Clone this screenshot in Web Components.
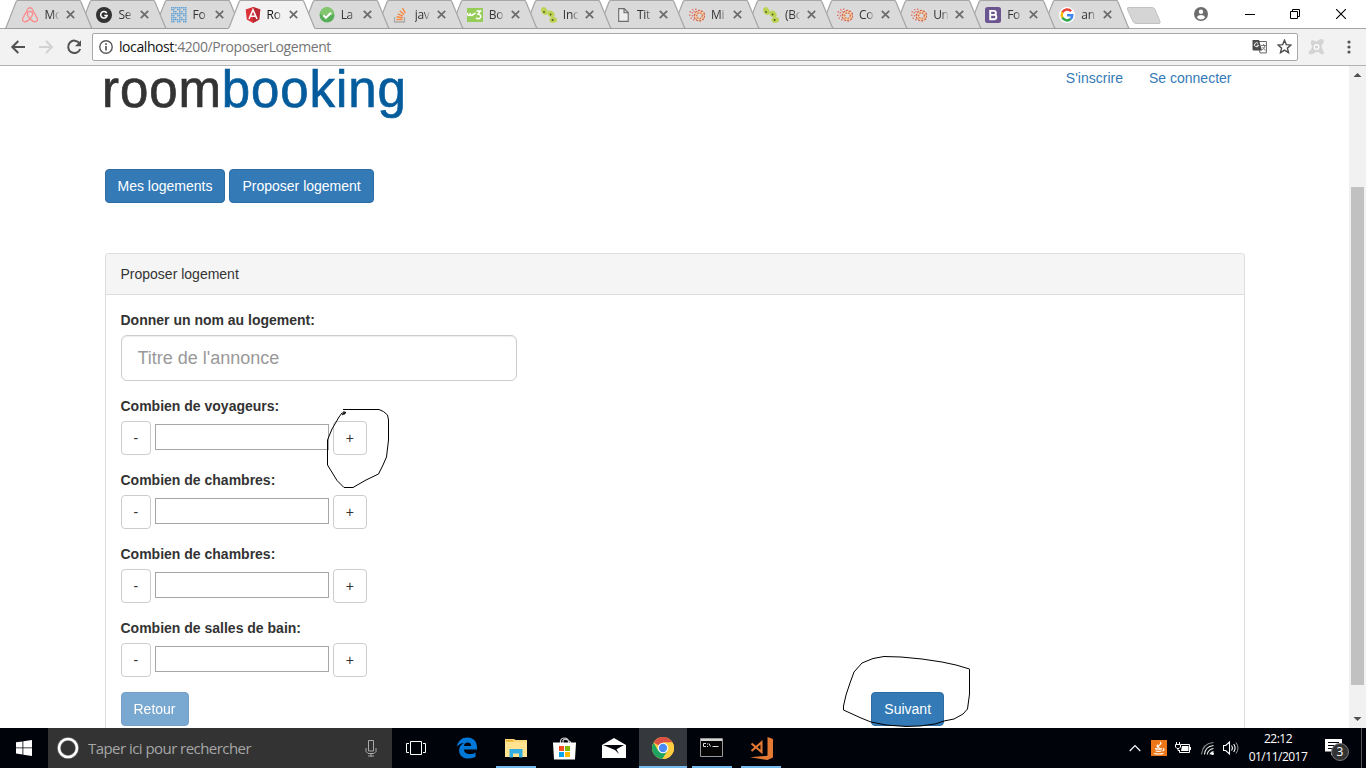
<!DOCTYPE html>
<html lang="fr">
<head>
<meta charset="utf-8">
<title>RoomBooking</title>
<style>
html,body{margin:0;height:100%;overflow:hidden;background:#fff}
body{font-family:"Liberation Sans",Arial,sans-serif;font-size:14px;line-height:20px;color:#333}
</style>
</head>
<body>
<app-desktop></app-desktop>
<script>
const define=(name,css,html)=>customElements.define(name,class extends HTMLElement{
  constructor(){
    super();
    const t=document.createElement('template');
    t.innerHTML='<style>*{box-sizing:border-box}'+css+'</style>'+(typeof html==='function'?html(this):html);
    this.attachShadow({mode:'open'}).append(t.content.cloneNode(true));
  }
});

/* Favicons, each on a 16x16 grid */
const cells=(()=>{let s='';for(let y=0;y<8;y++)for(let x=0;x<8;x++){if((x*3+y*5+x*y)%3!==1||x===0&&y%2)s+=`<path d="M${x*2} ${y*2}h1.6v1.6h-1.6z"/>`}return s})();
const ring=`<g fill="none"><circle cx="10.500" cy="8.700" r="3.900" stroke="#eab795" stroke-width="3.400"/><circle cx="10.500" cy="8.700" r="5.200" stroke="#cc5f5c" stroke-width="1.300" stroke-dasharray="1.800 1.400"/><circle cx="10.500" cy="8.700" r="2.800" stroke="#d4644f" stroke-width="1.200" stroke-dasharray="1.200 1.500"/><circle cx="10.500" cy="8.700" r="4" stroke="#fbe0a0" stroke-width="1.200" stroke-dasharray="1.300 2.200"/></g><g fill="#e07c72"><path d="M.5 4H2v1.500H.5zM3 2h1.500v1.500H3zM6 1.500h1.500V3H6zM2.500 5H4v1.500H2.500zM0 7.500h1.500V9H0zM2.800 8h1.500v1.500H2.800zM1.500 10.500H3V12H1.500zM4.500 4h1.300v1.300H4.500zM4 12h1.500v1.500H4z"/></g>`;
const seeds=`<g fill="#bdd353"><ellipse cx="3.4" cy="4" rx="3" ry="4" transform="rotate(-25 3.4 4)"/><ellipse cx="10" cy="7" rx="3.9" ry="2.900" transform="rotate(35 10 7)"/><ellipse cx="12.2" cy="13" rx="3.9" ry="2.900" transform="rotate(-8 12.2 13)"/></g><g fill="#4c5b2b"><circle cx="3" cy="5" r=".9"/><circle cx="9.6" cy="7.5" r=".9"/><circle cx="11.6" cy="13" r="1"/></g>`;
const fav={
 airbnb:`<path d="M8 11.7C6 9.500 5.300 8.200 5.300 7a2.700 2.700 0 0 1 5.400 0c0 1.200-.7 2.500-2.700 4.700-2 2.300-3.900 3.400-5.600 3.100C.8 14.500.1 12.900.8 11.300L5.800 2C6.700.3 9.300.3 10.200 2l5 9.300c.7 1.600 0 3.200-1.600 3.500-1.700.3-3.600-.8-5.600-3.100z" fill="none" stroke="#fb8a8d" stroke-width="1.300"/>`,
 g:`<circle cx="8" cy="8" r="8" fill="#333"/><path d="M10.800 6.100A3.300 3.300 0 1 0 11.200 8.400H8.300" fill="none" stroke="#fff" stroke-width="1.500"/>`,
 grid:`<g fill="#6ba5d6">${cells}</g>`,
 angular:`<path d="M8 0l7.300 2.600-1.100 9.800L8 16l-6.200-3.600L.7 2.600z" fill="#dd3138"/><path d="M8 0l7.300 2.600-1.100 9.800L8 16z" fill="#b92a34"/><path d="M4 12L8 2.700l4 9.300M5.700 9.200h4.600" fill="none" stroke="#fff" stroke-width="1.600"/>`,
 check:`<circle cx="8" cy="8" r="7.500" fill="#58af59"/><path d="M1 7a7 7 0 0 1 14 0c-3 2-10 2-14 0z" fill="#82c66f"/><path d="M4.300 8.300l2.600 2.500L12 5.700" fill="none" stroke="#fff" stroke-width="2.200"/>`,
 stack:`<path d="M1.500 10v5h10v-5" fill="none" stroke="#aaa" stroke-width="1.300"/><path d="M3.500 12.500h6M3.600 9.800l6 .9M4.700 6.800l5.500 2.300M6.700 3.800l4.300 3.800M9.500 1.200l2.800 4.900" stroke="#f58b48" stroke-width="1.400"/>`,
 w3:`<path d="M0 1h16v14H0z" fill="#96cd59"/><path d="M.5 6v1.500q1.300 2 2.700 0V6v1.500q1.400 2 2.800 0L8.500 6M9.500 4h4L11 7.200q3 .2 2.700 2.800-1.300 2.800-4.700 1" fill="none" stroke="#fff" stroke-width="1.500"/>`,
 seeds, ring,
 file:`<path d="M3.700 1.600h5.500l4 4v8.800H3.700zM9 1.600v4.200h4.200" fill="#eee" stroke="#6b6b6b" stroke-width="1.100"/>`,
 boot:`<rect width="16" height="16" rx="2.500" fill="#6b5591"/><path d="M5.200 3.900h3.700a2 2 0 0 1 0 4H5.200zm0 4h4a2.150 2.150 0 0 1 0 4.300h-4z" fill="none" stroke="#fff" stroke-width="1.900"/>`,
 google:`<circle cx="8" cy="8" r="8" fill="#fff"/><g fill="none" stroke-width="2.500"><path d="M12.100 4.200A5.300 5.300 0 0 0 3.400 5.400" stroke="#ea4335"/><path d="M3.400 5.400a5.300 5.300 0 0 0 0 5.200" stroke="#fbbc05"/><path d="M3.400 10.600A5.300 5.300 0 0 0 11.600 12" stroke="#34a853"/><path d="M11.600 12A5.300 5.300 0 0 0 13.300 8.200H8" stroke="#4285f4"/></g>`
};

define('browser-tab',`
:host{display:block;position:relative;flex:none;width:74.070px;height:29px;z-index:var(--z)}
.shape{position:absolute;left:-1px;top:0;display:block}
.row{position:relative;display:flex;align-items:center;height:29px;padding-left:16px}
.row svg{flex:none}
.t{width:15px;margin-left:6px;overflow:hidden;white-space:nowrap;font:12px/20px "Open Sans","Noto Sans",sans-serif;letter-spacing:-.3px;color:#333;-webkit-mask:linear-gradient(90deg,#000 55%,#0002);mask:linear-gradient(90deg,#000 55%,#0002)}
:host([active]) .t{color:#111}
.x{margin-left:7px}`,
el=>{const a=el.hasAttribute('active');return `<svg class="shape" width="90" height="29" viewBox="0 0 90 29"><path d="M0 28.500C1 28 1 27.500 1.500 26.500L11 2Q11.700.5 13 .5H74Q75.500.5 76 2L86 26.500Q86.500 28 87.500 28.500${a?'V29H0':''}z" fill="${a?'#f2f2f2':'#dadada'}"/><path d="M0 28.500C1 28 1 27.500 1.500 26.500L11 2Q11.700.5 13 .5H74Q75.500.5 76 2L86 26.500Q86.500 28 87.500 28.500" fill="none" stroke="#a6a6a6" stroke-width="1.200"/>${a?'':'<path d="M0 28.500H88" stroke="#9d9d9d"/>'}</svg>
<div class="row"><svg width="16" height="16" viewBox="0 0 16 16">${fav[el.getAttribute('icon')]}</svg><span class="t"><slot></slot></span><svg class="x" width="9" height="9" viewBox="0 0 9 9"><path d="M.8.8l7.400 7.400M8.200.8L.8 8.200" stroke="#6b6b6b" stroke-width="1.700"/></svg></div>`});

const tabs=[['airbnb','Mo'],['g','Se'],['grid','Fo'],['angular','Ro'],['check','La'],['stack','jav'],['w3','Bo'],['seeds','Inc'],['file','Tit'],['ring','Mi'],['seeds','(Bo'],['ring','Co'],['ring','Un'],['boot','Fo'],['google','an']];
define('tab-strip',`
:host{display:flex;position:relative;height:29px;padding-left:6.400px;background:linear-gradient(#fff 28px,#a6a6a6 28px)}
.new{flex:none;margin:6px 0 0 9px}
.win{display:flex;align-items:center;margin-left:auto;height:27px;padding-right:20px}
.win svg{display:block}`,
tabs.map((t,i)=>`<browser-tab icon="${t[0]}" ${i===3?'active':''} style="--z:${i===3?30:20-i}">${t[1]}</browser-tab>`).join('')+
`<svg class="new" width="36" height="19" viewBox="0 0 36 19"><path d="M2 1.500h24q2 0 3 2l5 12q.5 2-1 2H10q-2 0-3-2L1.500 3.500Q1 1.500 2 1.500z" fill="#d5d5d5" stroke="#c2c2c2"/></svg>
<div class="win"><svg width="14" height="14" viewBox="0 0 14 14" style="margin-right:37px"><circle cx="7" cy="7" r="7" fill="#6c6c6c"/><circle cx="7" cy="4.700" r="2.200" fill="#fff"/><path d="M2.800 10.200Q4 8 7 8t4.200 2.200Q9.500 12.400 7 12.400T2.800 10.200z" fill="#fff"/></svg>
<svg width="10" height="10" viewBox="0 0 10 10" style="margin-right:35px"><path d="M0 5.500h10" stroke="#000"/></svg>
<svg width="10" height="10" viewBox="0 0 10 10" style="margin-right:36px"><path d="M.5 2.500h7v7h-7zM2.500 2V.5h7v7H8" fill="none" stroke="#000"/></svg>
<svg width="10" height="10" viewBox="0 0 10 10"><path d="M0 0l10 10M10 0L0 10" stroke="#000" stroke-width="1.100"/></svg></div>`);

define('address-bar',`
:host{display:flex;align-items:center;height:37px;padding:0 13px 1px 10px;background:#f2f2f2;border-bottom:1px solid #b4b3b4}
svg{display:block;flex:none}
.box{flex:none;display:flex;align-items:center;width:1206px;height:28px;margin-left:10px;padding:0 5px 0 6px;background:#fff;border:1px solid #a9a8a9;border-radius:2px}
.url{margin-left:6px;font:14px/20px "Open Sans","Noto Sans",sans-serif;letter-spacing:-.42px;color:#757575;white-space:nowrap}
b{font-weight:400;color:#111}
.end{display:flex;align-items:center;margin-left:auto}`,
`<svg width="72" height="18" viewBox="0 0 72 18"><path d="M15 9H2.500M8.300 3L2.300 9l6 6" fill="none" stroke="#525252" stroke-width="2"/><path d="M29 9h13M36 3l6 6-6 6" fill="none" stroke="#d2d2d2" stroke-width="2"/><path d="M69.500 5.300A6.200 6.200 0 1 0 70.200 11" fill="none" stroke="#525252" stroke-width="2"/><path d="M71 2.200v6h-6z" fill="#525252"/></svg>
<div class="box"><svg width="14" height="14" viewBox="0 0 14 14"><circle cx="7" cy="7" r="6.200" fill="none" stroke="#585858" stroke-width="1.400"/><path d="M7 6v4.500M7 3.300v1.700" stroke="#585858" stroke-width="1.700"/></svg>
<span class="url"><b>localhost</b>:4200/ProposerLogement</span>
<div class="end"><svg width="15" height="15" viewBox="0 0 15 15"><path d="M6 2.500h8.400v11.400H8z" fill="#fff" stroke="#666"/><path d="M1 1h6l3 10.500H1.500Q.5 11.500.5 10.500V1.500z" fill="#4c4c4c"/><path d="M6.200 4.600a2 2 0 1 0 .3 1.700H4.800" fill="none" stroke="#fff"/><path d="M9 6.500h5M11.600 5v1.500M13 6.500q-.5 3-3 4.500M10.500 8l3 3.500" fill="none" stroke="#777"/></svg>
<svg style="margin-left:10px" width="15" height="15" viewBox="0 0 15 15"><path d="M7.500 1.200l1.800 4.400 4.700.4-3.600 3.100 1.100 4.600-4-2.500-4 2.500 1.100-4.600L1 6l4.700-.4z" fill="none" stroke="#4e4e4e" stroke-width="1.400"/></svg></div></div>
<svg style="margin-left:10px" width="16" height="16" viewBox="0 0 16 16"><path d="M3 2q2-1.500 4 .5 2.500 0 4.500-2Q15-1 16 2q0 2-2.500 4.500Q14 10 16 14q-.500 2-3 1-2-2.500-5-2Q3 17 .7 14.500q-1-1.500 2.300-4Q5 8 3 5z" fill="#d4d4d4"/><circle cx="8.500" cy="8" r="2.300" fill="#d4d4d4" stroke="#fff" stroke-width="1.300"/></svg>
<svg style="margin-left:auto;margin-right:2.500px" width="4" height="14" viewBox="0 0 4 14"><g fill="#555"><circle cx="2" cy="2" r="1.600"/><circle cx="2" cy="7" r="1.600"/><circle cx="2" cy="12" r="1.600"/></g></svg>`);

define('rb-button',`
:host{display:block;flex:none;height:34px;padding:6px 12px;border:1px solid #2e6da4;border-radius:4px;background:#337ab7;color:#fff;white-space:nowrap;box-sizing:border-box}
:host([plain]){background:#fff;border-color:#ccc;color:#333}
:host([disabled]){opacity:.65}`,`<slot></slot>`);

define('number-stepper',`
:host{display:block;margin-bottom:15px}
label{display:block;font-weight:700;margin-bottom:5px}
.r{display:flex;align-items:flex-start}
input{width:174px;height:26px;margin:3px 4px 0 3.500px;padding:1px;border:1px solid #a6a6a6;border-radius:0;background:#fff;outline:0}`,
`<label><slot></slot></label><div class="r"><rb-button plain>-</rb-button><input type="text"><rb-button plain>+</rb-button></div>`);

define('rb-panel',`
:host{display:block;border:1px solid #ddd;border-bottom:0;border-radius:4px 4px 0 0;height:475px}
header{height:41px;padding:10px 15px;background:#f5f5f5;border-bottom:1px solid #ddd;border-radius:3px 3px 0 0}
.body{padding:15px 15px 0}`,`<header><slot name="title"></slot></header><div class="body"><slot></slot></div>`);

define('listing-form',`
:host{display:block}
label{display:block;font-weight:700;margin-bottom:5px}
.title{display:block;width:396px;height:46px;padding:10px 16px;margin-bottom:15px;border:1px solid #ccc;border-radius:6px;font:18px/24px "Liberation Sans",Arial,sans-serif;box-shadow:inset 0 1px 1px rgba(0,0,0,.075)}
.title::placeholder{color:#999;opacity:1}
.act{display:flex}.act rb-button+rb-button{margin-left:682.800px}`,
`<rb-panel><span slot="title">Proposer logement</span>
<label>Donner un nom au logement:</label><input class="title" placeholder="Titre de l'annonce">
<number-stepper>Combien de voyageurs:</number-stepper><number-stepper>Combien de chambres:</number-stepper><number-stepper>Combien de chambres:</number-stepper><number-stepper>Combien de salles de bain:</number-stepper>
<div class="act"><rb-button disabled>Retour</rb-button><rb-button>Suivant</rb-button></div></rb-panel>`);

define('site-page',`
:host{display:flex;height:662px}
main{flex:1;padding:0 104.500px;min-width:0}
.head{display:flex;justify-content:space-between;height:103px}
.logo{position:relative;font-size:51px;line-height:60px;margin:-6px 0 0 -2.500px;color:#333;height:60px;letter-spacing:.9px;-webkit-text-stroke:.7px currentColor}
.logo b{font-weight:400;color:#055c9d}
nav{display:flex;gap:26px;padding:2px 13px 0 0;color:#337ab7}
.btns{display:flex;gap:4px;margin-bottom:50px}
.sb{width:17px;flex:none;background:#f1f1f1;display:flex;flex-direction:column;align-items:center}
.thumb{width:13px;height:498px;margin-top:104px;background:#c1c1c1}
.sb svg{display:block;flex:none}`,
`<main><div class="head"><div class="logo">room<b>booking</b></div><nav><span>S'inscrire</span><span>Se connecter</span></nav></div>
<div class="btns"><rb-button>Mes logements</rb-button><rb-button>Proposer logement</rb-button></div><listing-form></listing-form></main>
<div class="sb"><svg width="17" height="17" viewBox="0 0 17 17"><path d="M4.500 11L8.500 7l4 4z" fill="#505050"/></svg><div class="thumb"></div><svg style="margin-top:26px" width="17" height="17" viewBox="0 0 17 17"><path d="M4.500 6l4 4 4-4z" fill="#505050"/></svg></div>`);

define('pen-marks',`:host{position:absolute;left:0;top:0;width:1366px;height:728px;pointer-events:none;z-index:40}svg{display:block}`,
`<svg width="1366" height="728" viewBox="0 0 1366 728" fill="none" stroke="#000" stroke-width="1"><path d="M343 409.500H379Q384 411 387.500 415L388.500 420V440L386.500 457 383 465 378.500 474 366 480 353 487.500H344L337 480.500 327.500 465V440L332 429 339 417 342 413 346 413M344 411v4M342 415l4-3"/><path d="M969.500 669V694L967.500 709 963 714 954 719 944 721 935 724 920 726 906 726.500 886 725 871 722 861 718 843.500 710V706L846 695 850 683 854 672 862 663 873 658.500 884 656.500 901 657 922 659 942 662 956 665 969.500 669"/></svg>`);

define('task-button',`
:host{display:flex;position:relative;flex:none;width:49px;height:40px;align-items:center;justify-content:center}
:host([current]){background:#35383c;width:48px}
i{position:absolute;bottom:0;left:5px;right:4px;height:2px;background:#76b9ed;display:none}
:host([open]) i{display:block}:host([current]) i{left:0;right:0}`,`<slot></slot><i></i>`);

define('task-bar',`
:host{display:flex;height:40px;background:#01030a;font-family:"Open Sans","Noto Sans",sans-serif;color:#fff}
svg{display:block;flex:none}
.start{width:48px;display:flex;align-items:center;justify-content:center}
.search{width:344px;background:#333;display:flex;align-items:center;padding:0 15px 0 9px;color:#a6a6a6;font-size:15px}
.search span{margin-left:9px;letter-spacing:-.55px;white-space:nowrap}
.search .mic{margin-left:auto}
.tray{display:flex;align-items:center;margin-left:auto}
.clock{width:60px;text-align:center;font-size:12px;line-height:18px;letter-spacing:-.5px;white-space:nowrap}
.note{position:relative;width:34px;height:28px;margin-left:16px}
.note em{position:absolute;left:7px;top:9px;width:18px;height:18px;border-radius:50%;background:#333;border:1px solid #777;font:12px/16px "Open Sans",sans-serif;text-align:center}
.edge{width:1px;height:40px;background:#555;margin-right:4px}`,
`<div class="start"><svg width="16" height="16" viewBox="0 0 16 16" fill="#fff"><path d="M0 2.300L6.500 1.400V7.500H0zM7.300 1.300L16 0v7.500H7.300zM0 8.300h6.500v6.200L0 13.600zM7.300 8.300H16V16l-8.700-1.300z"/></svg></div>
<div class="search"><svg width="22" height="22" viewBox="0 0 22 22"><circle cx="11" cy="11" r="9" fill="none" stroke="#777" stroke-width="3.600"/><circle cx="11" cy="11" r="9" fill="none" stroke="#fff" stroke-width="2.500"/></svg><span>Taper ici pour rechercher</span><svg class="mic" width="12" height="17" viewBox="0 0 12 17"><path d="M3.500.5h5v10.500h-5zM1 8v3.500L3 13.500H9l2-2V8M6 13.500v3M3 16h6" fill="none" stroke="#aaa"/></svg></div>
<task-button style="width:48px"><svg width="20" height="16" viewBox="0 0 20 16"><path d="M4.500 1.500h11v13h-11zM3 3.500H.5v9H3M17 3.500h2.500v9H17" fill="none" stroke="#fff"/></svg></task-button>
<task-button style="width:51px"><svg style="margin-left:3px" width="20" height="22" viewBox="0 0 21 22"><path d="M0 9.500C1 3.500 5 0 11 0c6.500 0 10 4.500 10 10v2.500H7.200c.3 3.500 3.300 4.800 6.300 4.800 2.300 0 4.300-.7 6-1.700v4.600C17.500 21.300 15 22 12 22 6 22 2.200 18.500 2.200 13.500c0-3.500 2-6.300 5-7.700C4.500 6 2 7.400 0 9.500zM7.300 9h7.600c0-2.300-1.200-3.900-3.600-3.900S7.500 6.700 7.300 9z" fill="#0078d7"/></svg></task-button>
<task-button open><svg width="22" height="19" viewBox="0 0 22 19"><path d="M0 0h9l1.500 1H22v17H0z" fill="#f9d878"/><path d="M1 1h7l1 1.500H1z" fill="#e7ad2c"/><path d="M0 3h22v15H0z" fill="#ffe391"/><path d="M4.500 10h13v8.500h-3.500V14.500H8v4H4.500z" fill="#32ade2"/></svg></task-button>
<task-button><svg width="23" height="23" viewBox="0 0 23 23"><path d="M7.500 7V4Q8 1 11.500 1t4 3v3M10 6V3.500Q11 2 13 2.500T17.500 5v2" fill="none" stroke="#ccc" stroke-width="1.200"/><path d="M0 5.500h23L22 22.500H1z" fill="#fff"/><path d="M6 9h5v5H6z" fill="#f25022"/><path d="M12 9h5v5h-5z" fill="#7fba00"/><path d="M6 15h5v5H6z" fill="#00a4ef"/><path d="M12 15h5v5h-5z" fill="#ffb900"/></svg></task-button>
<task-button style="width:50px"><svg width="24" height="20" viewBox="0 0 24 20"><path d="M0 7L12 0l12 7v13H0z" fill="#fff"/><path d="M1 7h21l-7.500 4.300L17 16 13 12z" fill="#01030a"/></svg></task-button>
<task-button current open><svg width="22" height="22" viewBox="0 0 22 22"><circle cx="11" cy="11" r="11" fill="#ffcd40"/><path d="M11 11L1.500 5.500A11 11 0 0 1 20.500 5.500H11z" fill="#dd5144"/><path d="M1.500 5.500A11 11 0 0 0 10.500 22l5.200-8.700L11 11 6.200 13.700z" fill="#1da462"/><path d="M11 5.500h9.500a11 11 0 0 1-10 16.500l5.300-8.300z" fill="#ffcd40"/><circle cx="11" cy="11" r="5.300" fill="#fff"/><circle cx="11" cy="11" r="4.200" fill="#4c8bf5"/></svg></task-button>
<task-button open><svg width="23" height="20" viewBox="0 0 23 20"><path d="M.5.5h22v18H.5z" fill="#050505" stroke="#999"/><path d="M1 1h21v2H1z" fill="#d5d5d5"/><path d="M6 5.500H3.500v3H6M7.500 5.500v1M7.500 8v1M9 5.500l1.500 3M12.500 8.500h6" fill="none" stroke="#ddd"/></svg></task-button>
<task-button open><svg width="24" height="23" viewBox="0 0 24 23" fill="#e37933"><path d="M18.500 0L24 2v18.500L18.500 23 1 20.300l17.500-1.500z"/><path d="M2.500 6.500L12.500 15V5.200L2.500 14" fill="none" stroke="#e37933" stroke-width="2.100"/></svg></task-button>
<div class="tray"><svg width="12" height="8" viewBox="0 0 12 8"><path d="M.7 7L6 1.700 11.300 7" fill="none" stroke="#fff" stroke-width="1.200"/></svg>
<svg style="margin-left:10px" width="16" height="16" viewBox="0 0 16 16"><path d="M0 0h16v16H0z" fill="#ed7718"/><path d="M9 2Q11 3.500 8.500 5T8.500 8M6.500 4.500q-1 1.500.5 3M4 8.700q3.500 1 7 0M4.500 11q3 .8 6 0M3 13.500q5 1 9.500 0M12 8.500q2.200.8-.5 2.500" fill="none" stroke="#fff" stroke-width="1.200"/></svg>
<svg style="margin-left:8px" width="16" height="12" viewBox="0 0 16 12"><path d="M6 2.500h8.500v8H4.500V8M15.500 5v3M1.500 0v2M4.500 0v2M.5 2.500h5V5L4 6.500H2L.5 5zM3 6.500v2h2" fill="none" stroke="#fff"/><path d="M7 4h6.500v5H6z" fill="#fff"/></svg>
<svg style="margin-left:10px" width="13" height="13" viewBox="0 0 13 13"><g fill="none" stroke="#f0f0f0" stroke-width="1.100"><path d="M.5 12.500Q1.500 1.500 12.500.5" stroke="#888"/><path d="M3.500 12.500Q4 4.500 12.500 3.500M6.200 12.500Q7 7.500 12.500 6.500M9 12.500Q9.500 10 12.500 9.500"/></g><circle cx="11.500" cy="11.500" r="1.500" fill="#fff"/></svg>
<svg style="margin-left:9px" width="16" height="14" viewBox="0 0 16 14"><path d="M.5 4.500h2.200L6.500 1v12L2.700 9.500H.5zM8.500 4.500q1.800 2.500 0 5M10.700 3q2.800 4 0 8" fill="none" stroke="#fff" stroke-width="1.100"/><path d="M13 1.500q4 5.500 0 11" fill="none" stroke="#999"/></svg>
<div class="clock" style="margin-left:9px">22:12<br>01/11/2017</div>
<div class="note"><svg style="margin:5px 0 0 1px" width="17" height="17" viewBox="0 0 17 17"><path d="M0 0h17v12.500H9.500L6 16.500v-4H0z" fill="#fff"/><path d="M3 3.500h11M3 6.500h11M3 9.500h7" stroke="#01030a"/></svg><em>3</em></div><div class="edge" style="margin-left:3px"></div></div>`);

define('app-desktop',`:host{display:block;position:relative;width:1366px;height:768px;overflow:hidden}`,
`<tab-strip></tab-strip><address-bar></address-bar><site-page></site-page><pen-marks></pen-marks><task-bar></task-bar>`);
</script>
</body>
</html>
